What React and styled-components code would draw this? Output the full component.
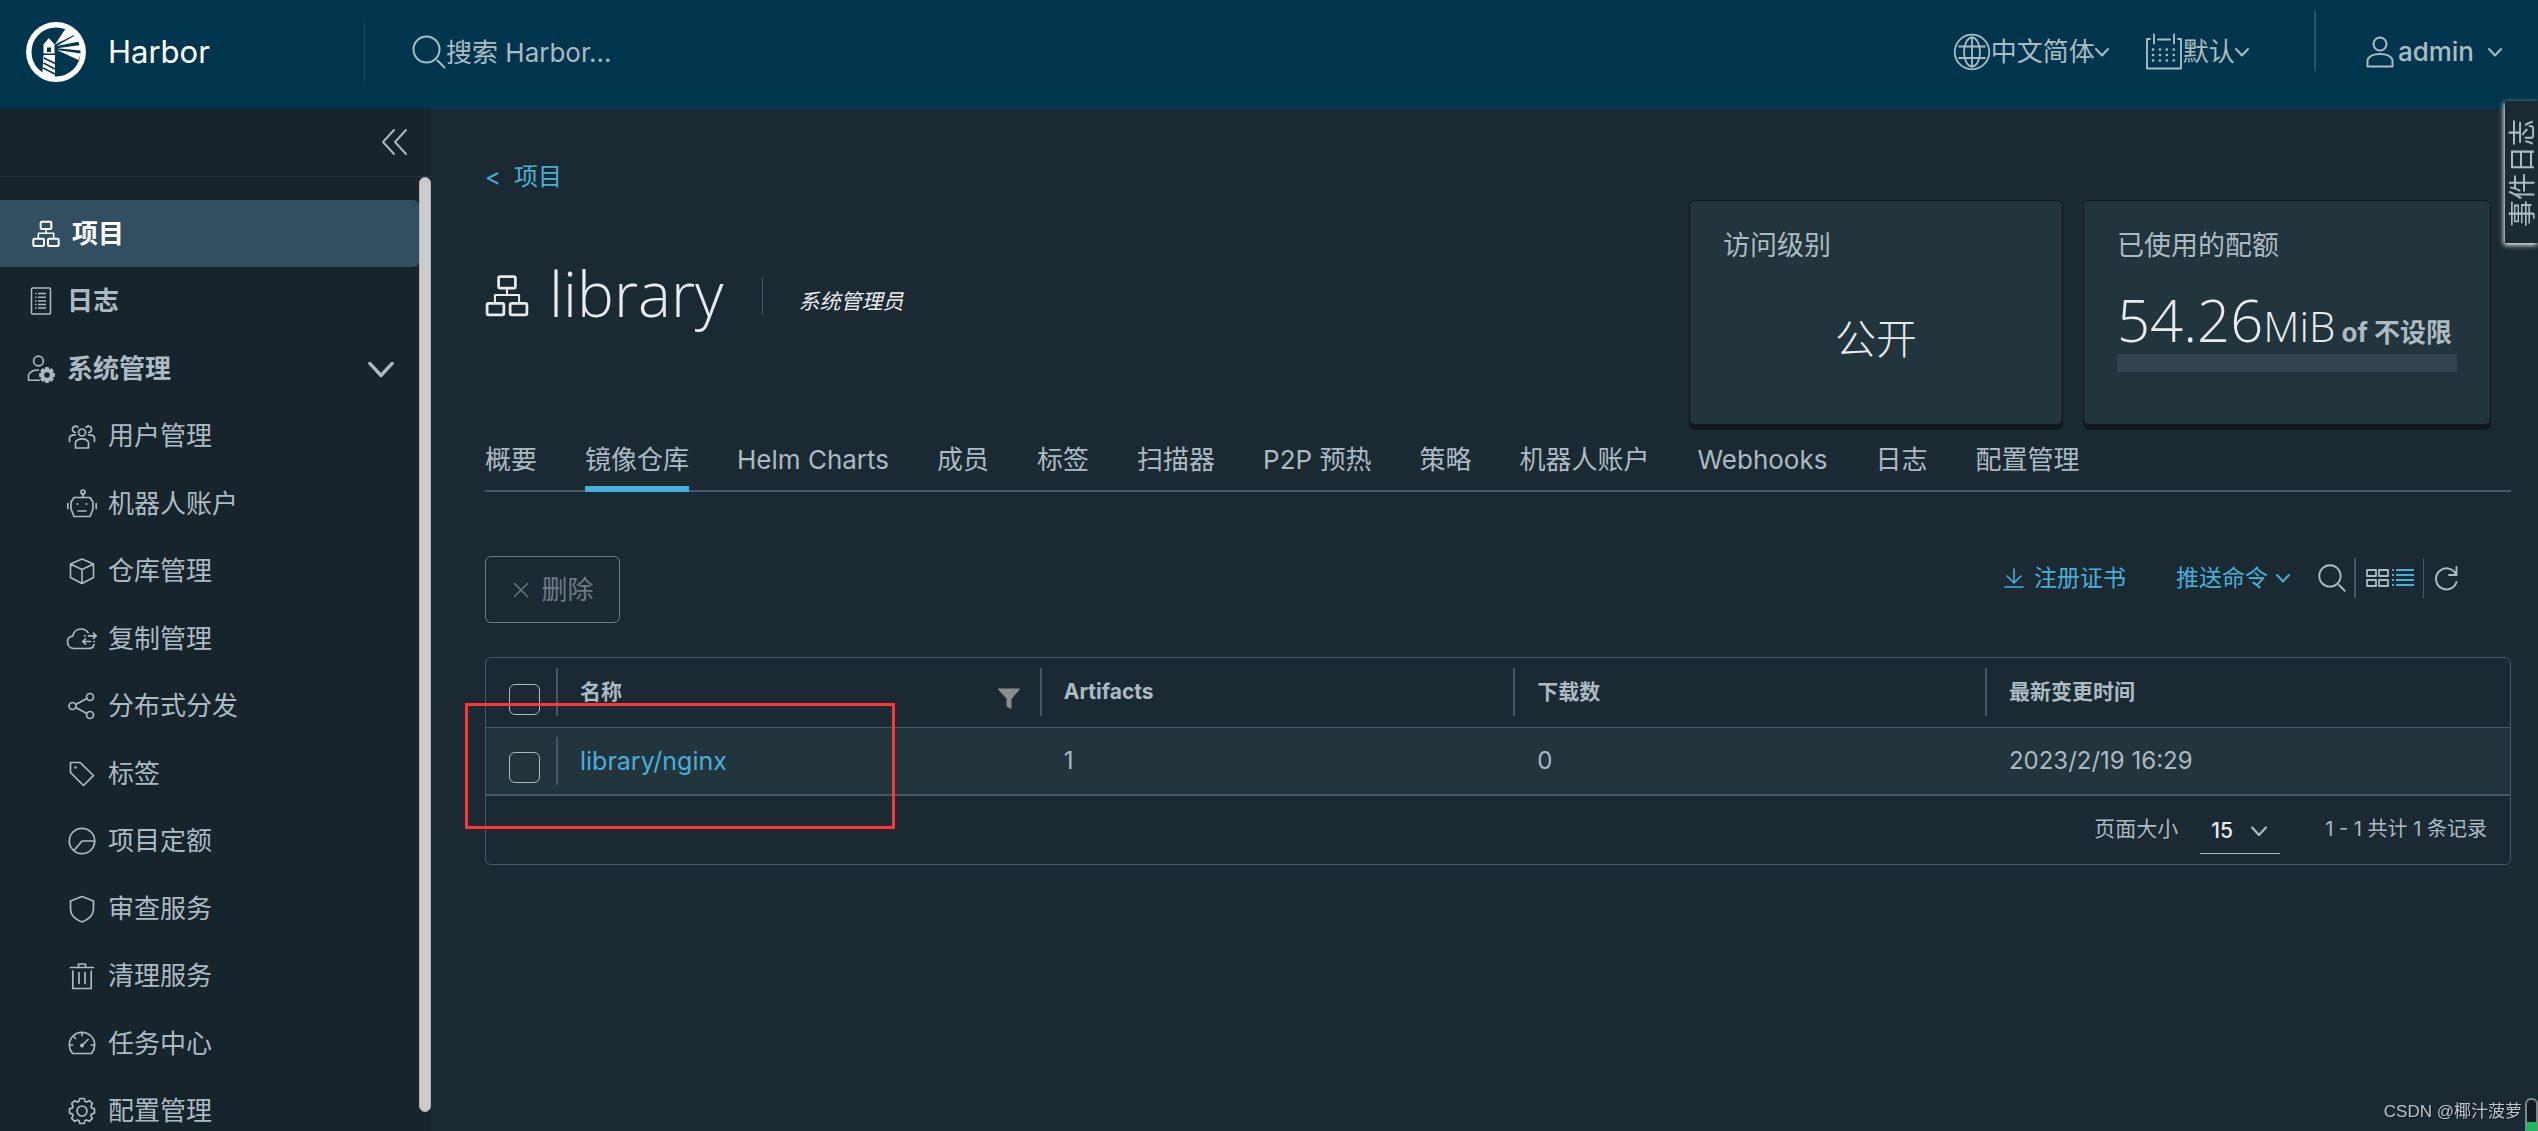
import React from "react";
import styled, { createGlobalStyle, css } from "styled-components";

const c = {
  header: "#00364d",
  side: "#17242b",
  page: "#1b2a32",
  card: "#22343c",
  line: "#495865",
  text: "#acbac3",
  bright: "#e9ecef",
  link: "#49afd9",
};
const cjk = `"Noto Sans CJK SC", sans-serif`;
const body = `Inter, ${cjk}`;
const light = `"Open Sans", ${cjk}`;

const Global = createGlobalStyle`
  *, *::before, *::after { box-sizing: border-box; }
  body { margin: 0; background: ${c.page}; color: ${c.text}; font-family: ${body}; font-size: 26px; line-height: 36px; }
  button, input, select { font: inherit; color: inherit; margin: 0; }
  a { text-decoration: none; color: inherit; }
`;

/* ---------- icons ---------- */
const Svg = styled.svg`
  display: block;
  flex: none;
  fill: none;
  stroke: currentColor;
  stroke-linejoin: round;
  stroke-linecap: round;
`;
const Icon = ({ size = 32, w = 2, box = "0 0 36 36", height, children }) => (
  <Svg width={size} height={height || size} viewBox={box} strokeWidth={w} aria-hidden="true">
    {children}
  </Svg>
);
const OrgIcon = ({ size = 28, w = 3 }) => (
  <Icon size={size} w={w} box="-1 -1 42 42">
    <rect x="12" y="1.5" width="16" height="11" rx="1.5" />
    <rect x="1" y="27" width="16" height="11" rx="1.5" />
    <rect x="23" y="27" width="16" height="11" rx="1.5" />
    <path d="M20 12.500V19M8.500 26.500V19H31.500V26.500" strokeWidth={w * 0.75} />
  </Icon>
);
const LogIcon = () => (
  <Icon size={28} w={1.5} box="0 0 28 28">
    <rect x="4.500" y="1" width="19" height="26" rx="1" />
    <path d="M8 6.500h1.500M8 10.200h1.500M8 13.900h1.500M8 17.600h1.500M8 21h1.500M11 6.500h8M11 10.200h8M11 13.900h8M11 17.600h8M11 21h8" strokeLinecap="butt" />
  </Icon>
);
const gearTeeth = (cx, cy, r, R, n) => {
  const pts = [];
  for (let i = 0; i < n; i++) {
    const a = (i * 2 * Math.PI) / n;
    const d = Math.PI / n;
    [[-0.95, r], [-0.5, R], [0.5, R], [0.95, r]].forEach(([k, q]) => {
      const t = a + k * d * 0.85;
      pts.push(`${(cx + q * Math.sin(t)).toFixed(2)},${(cy - q * Math.cos(t)).toFixed(2)}`);
    });
  }
  return pts.join(" ");
};
const AdminIcon = () => (
  <Icon size={28} w={1.6} box="0 0 28 28">
    <circle cx="11.500" cy="6" r="4.900" />
    <path d="M12.500 25.200H1.500V20c1.500-3.500 5.500-5 10-5" />
    <polygon points={gearTeeth(20, 20, 5.2, 7.2, 8)} fill="currentColor" />
    <circle cx="20" cy="20" r="2.800" fill={c.side} stroke="none" />
  </Icon>
);
const UsersIcon = () => (
  <Icon size={32} w={1.7} box="0 0 32 32">
    <circle cx="16" cy="12.500" r="3.500" />
    <path d="M9.500 28v-5.500c0-2 3-3.700 6.500-3.700s6.500 1.700 6.500 3.700V28z" />
    <path d="M9.300 12.500a3.200 3.200 0 1 1 2.700-5.300M22.700 12.500a3.200 3.200 0 1 0-2.700-5.300" />
    <path d="M3.500 21.500V17.500c.8-1.800 3-2.700 6-2.500M28.500 21.500V17.500c-.8-1.800-3-2.700-6-2.500" />
  </Icon>
);
const RobotIcon = () => (
  <Icon size={32} w={1.7} box="0 0 32 32">
    <path d="M8 9.500H24L27 14V21L24 28.500H8L5 21V14z" />
    <circle cx="17" cy="4" r="2" />
    <path d="M17 6v3.500M12 23h8M1.800 15.500v5M30.200 15.500v5" />
    <circle cx="11.500" cy="16" r="1" fill="currentColor" stroke="none" />
    <circle cx="20.500" cy="16" r="1" fill="currentColor" stroke="none" />
  </Icon>
);
const BoxIcon = () => (
  <Icon size={32} w={1.6} box="0 0 32 32">
    <path d="M16 4 27.500 9V22.500L16 28.500 4.500 22.500V9zM4.500 9 16 14.500 27.500 9M16 14.500v14" />
  </Icon>
);
const CloudIcon = () => (
  <Icon size={32} w={1.7} box="0 0 32 32">
    <path d="M22 9.500C20.500 7.300 18 6 15 6c-4.300 0-7.500 2.800-8 7-3.500.5-5.500 3-5.500 5.800C1.500 22.500 4 25.500 8 25.500h14.500c3 0 5-1.500 5.500-4" />
    <path d="M22.500 12.800h7.500M27.500 10.200l2.700 2.600-2.700 2.600M24.500 18.500H17M19.500 15.900l-2.700 2.600 2.700 2.600" />
    <path d="M18.500 12.800h.5M28 18.500h.5" />
  </Icon>
);
const ShareIcon = () => (
  <Icon size={32} w={1.7} box="0 0 32 32">
    <circle cx="24" cy="7" r="3.500" />
    <circle cx="6.500" cy="16" r="3.500" />
    <circle cx="24" cy="25" r="3.500" />
    <path d="M9.700 14.500 20.800 8.500M9.700 17.500l11.100 6" />
  </Icon>
);
const TagIcon = () => (
  <Icon size={32} w={1.7} box="0 0 32 32">
    <path d="M4.500 4.500H14L27.500 17.500 17.500 27.500 4.500 14.500z" />
    <circle cx="9.500" cy="9.500" r="1.200" fill="currentColor" stroke="none" />
  </Icon>
);
const QuotaIcon = () => (
  <Icon size={32} w={1.7} box="0 0 32 32">
    <circle cx="16" cy="16" r="12.700" />
    <path d="M28.500 16H16L8 25.500" />
  </Icon>
);
const ShieldIcon = () => (
  <Icon size={32} w={1.7} box="0 0 32 32">
    <path d="M16 3.500 27.500 8v8c0 6-5 10.500-11.500 13C9.500 26.500 4.500 22 4.500 16V8z" />
  </Icon>
);
const TrashIcon = () => (
  <Icon size={32} w={1.7} box="0 0 32 32">
    <path d="M4.500 7.500h23M6.800 11v17.500h18.400V11M12.500 7V4h7v3M13 12.500v11M19 12.500v11" />
  </Icon>
);
const GaugeIcon = () => (
  <Icon size={32} w={1.7} box="0 0 32 32">
    <path d="M6.500 25.500C4.500 23 3.300 20.300 3.300 17a12.700 12.700 0 0 1 25.400 0c0 3.300-1.200 6-3.200 8.500z" />
    <path d="M16 17.500 22 11.500M16 5v2.500M4 17h2.500M28 17h-2.500M8 9l1.500 1.500" />
    <circle cx="16" cy="17.500" r="2" fill="currentColor" stroke="none" />
  </Icon>
);
const GearIcon = () => (
  <Icon size={32} w={1.7} box="0 0 32 32">
    <polygon points={gearTeeth(16, 16, 10, 12.7, 8)} />
    <circle cx="16" cy="16" r="5" />
  </Icon>
);
const ChevronDown = ({ size = 14, w = 2 }) => (
  <Icon size={size} w={w} box="0 0 14 14"><path d="M1 4l6 6.500L13 4" /></Icon>
);
const SearchIcon = ({ size, w = 2 }) => (
  <Icon size={size} w={w} box="0 0 34 34">
    <circle cx="14.500" cy="14.500" r="13" /><path d="M25.500 25.500 32.500 32.500" />
  </Icon>
);
const GlobeIcon = () => (
  <Icon size={38} w={1.8} box="0 0 38 38">
    <circle cx="19" cy="19" r="17.300" />
    <ellipse cx="19" cy="19" rx="8" ry="14.500" />
    <path d="M19 4.500v29M6 13.500h26M6 25h26" />
  </Icon>
);
const CalendarIcon = () => (
  <Icon size={38} w={1.9} box="0 0 38 38">
    <path d="M5 6H2V35.500H36V6h-3M13 6.500h12M9 1.500v9M29 1.500v9" />
    <path d="M8 16.500h24M8 22h24M8 27.500h24" strokeDasharray="0.1 6.800" strokeWidth="2.600" />
  </Icon>
);
const UserIcon = () => (
  <Icon size={32} w={2} box="0 0 32 32">
    <circle cx="16" cy="8" r="6.500" />
    <path d="M3.500 30.500V24C5 20 10 18 16 18s11 2 12.500 6v6.500z" />
  </Icon>
);
const Lighthouse = () => (
  <svg width="60" height="60" viewBox="0 0 60 60" role="img" aria-label="Harbor logo">
    <circle cx="30" cy="30" r="27.200" fill="none" stroke="#fff" strokeWidth="5.400" />
    <path d="M29 22.500 40 6l9 6.500z M30.500 24 50 13l3.500 6.500z M31 26.300 55 23v5.500z M31 28 55 31.500l-2.500 6.500z" fill="#fff" />
    <path d="M17 23 22.800 16 29 23z M17.500 23H28.500V32H17.500z M17.500 33H29V57H16z" fill="#fff" />
    <path d="M21 25.500h4V30h-4z" fill={c.header} />
    <path d="M17 32.300H29M18 36l11 5.500M17.500 41l11.500 6M17 46l12 6" stroke={c.header} strokeWidth="1.500" />
  </svg>
);

/* ---------- shell ---------- */
const Page = styled.div`
  height: 100vh;
  overflow: hidden;
  display: flex;
  flex-direction: column;
`;
const Header = styled.header`
  flex: none;
  height: 109px;
  padding: 0 36px 6px 26px;
  background: ${c.header};
  display: flex;
  align-items: center;
`;
const Brand = styled.a`
  flex: none;
  width: 338px;
  display: flex;
  align-items: center;
  gap: 22px;
  color: #fff;
  font-size: 31px;
`;
const Divider = styled.span`
  flex: none;
  width: ${(p) => p.$w || 2}px;
  height: ${(p) => p.$h}px;
  background: ${(p) => p.$color || c.line};
`;
const Search = styled.label`
  flex: 1;
  display: flex;
  align-items: center;
  padding-left: 47px;
  input {
    flex: 1;
    border: 0;
    padding: 2px 0 0;
    background: none;
    outline: none;
    &::placeholder { color: ${c.text}; opacity: 1; }
  }
`;
const HeaderButton = styled.button`
  border: 0;
  background: none;
  padding: 0;
  display: flex;
  align-items: center;
  gap: ${(p) => p.$gap || 0}px;
  margin-right: ${(p) => p.$after || 0}px;
  font-weight: ${(p) => p.$weight || 400};
`;
const UserName = styled.span`
  margin-right: 12px;
`;
const HeaderRule = styled(Divider)`
  align-self: flex-start;
  margin: 11px 48px 0 0;
`;
const Body = styled.div`
  flex: 1;
  min-height: 0;
  display: flex;
`;
const Side = styled.nav`
  flex: none;
  width: 431px;
  background: ${c.side};
  display: flex;
  flex-direction: column;
`;
const Collapse = styled.button`
  flex: none;
  height: 68px;
  border: 0;
  border-bottom: 1px solid #22333b;
  background: none;
  padding: 0 22px 2px;
  display: flex;
  align-items: center;
  justify-content: flex-end;
`;
const SideScroll = styled.div`
  flex: 1;
  min-height: 0;
  display: flex;
`;
const SideList = styled.ul`
  flex: 1;
  list-style: none;
  margin: 0;
  padding: 23px 0 0;
  overflow: hidden;
`;
const SideItem = styled.li`
  height: 67px;
  &:nth-child(even) { height: 68px; }
`;
const SideLink = styled.a`
  height: 67px;
  display: flex;
  align-items: center;
  padding: 0 25px 0 ${(p) => (p.$nested ? 66 : p.$active ? 32 : 27)}px;
  gap: ${(p) => (p.$nested ? 10 : 12)}px;
  font-weight: ${(p) => (p.$nested ? 400 : 700)};
  ${(p) => p.$active && css`
    background: #324f62;
    color: #fff;
    border-radius: 0 6px 6px 0;
  `}
`;
const SideLabel = styled.span`
  flex: 1;
`;
const Thumb = styled.div`
  flex: none;
  width: 12px;
  margin-bottom: 19px;
  border-radius: 6px;
  background: #cbcbcb;
  border: 1px solid #b4b4b4;
`;

/* ---------- content ---------- */
const Main = styled.main`
  flex: 1;
  min-width: 0;
  padding: 0 27px 0 54px;
`;
const Summary = styled.section`
  display: flex;
  justify-content: space-between;
  height: 321px;
  padding-right: 20px;
`;
const Crumb = styled.a`
  display: inline-flex;
  gap: 13px;
  margin-top: 50px;
  font-size: 24px;
  color: ${c.link};
`;
const TitleRow = styled.div`
  display: flex;
  align-items: center;
  margin-top: 50px;
  color: ${c.bright};
  h1 {
    margin: 0 38px 6px 20px;
    font: 300 62px/96px ${light};
  }
  em { margin-left: 36px; padding-top: 12px; font-size: 21px; }
`;
const Cards = styled.div`
  display: flex;
  gap: 20px;
  margin-top: 91px;
`;
const Card = styled.article`
  width: ${(p) => p.$w}px;
  height: 225px;
  padding: 27px 33px;
  background: ${c.card};
  border: 1px solid #11181f;
  border-radius: 6px;
  box-shadow: 0 5px 0 #10171e;
  h2 { margin: 0; font-size: 27px; line-height: 36px; font-weight: 400; }
`;
const Level = styled.p`
  margin: 44px 0 0;
  text-align: center;
  color: ${c.bright};
  font: 300 41px/60px ${light};
`;
const Quota = styled.p`
  margin: 22px 0 0;
  white-space: nowrap;
  line-height: 30px;
  color: ${c.text};
  font-weight: 700;
  span { color: ${c.bright}; font-family: ${light}; font-weight: 300; }
`;
const Big = styled.span`
  font-size: 58px;
  line-height: 68px;
`;
const Unit = styled.span`
  font-size: 42px;
`;
const Meter = styled.div`
  height: 18px;
  background: #31444f;
`;
const Tabs = styled.div`
  display: flex;
  gap: 48px;
  border-bottom: 2px solid ${c.line};
`;
const Tab = styled.button`
  border: 0;
  background: none;
  padding: 12px 0;
  line-height: 36px;
  white-space: nowrap;
  box-shadow: ${(p) => (p.$active ? `0 2px 0 ${c.link}, inset 0 -4px 0 ${c.link}` : "none")};
`;
const Toolbar = styled.div`
  display: flex;
  justify-content: space-between;
  align-items: flex-start;
  margin-top: 64px;
`;
const DeleteButton = styled.button`
  height: 67px;
  width: 135px;
  display: flex;
  align-items: center;
  justify-content: center;
  gap: 12px;
  padding: 0 0 0 2px;
  border: 1px solid #6f7c85;
  border-radius: 6px;
  background: none;
  color: #6f7c85;
`;
const Actions = styled.div`
  display: flex;
  align-items: center;
  height: 44px;
  padding-right: 51px;
`;
const Action = styled.button`
  border: 0;
  background: none;
  padding: 0;
  display: flex;
  align-items: center;
  gap: ${(p) => p.$gap || 0}px;
  margin: 0 ${(p) => p.$after || 0}px 0 0;
  font-size: 23px;
  color: ${(p) => (p.$plain ? c.text : c.link)};
`;

const GridBox = styled.section`
  position: relative;
  margin-top: 34px;
  border: 1px solid ${c.line};
  border-radius: 6px;
`;
const Table = styled.table`
  width: 100%;
  table-layout: fixed;
  border-collapse: collapse;
  text-align: left;
`;
const Col = styled.col`width: ${(p) => p.$w};`;
const HeadRow = styled.tr`
  height: 69px;
  font-size: 21px;
  border-bottom: 1px solid ${c.line};
`;
const DataRow = styled.tr`
  height: 68px;
  font-size: 24px;
  background: ${c.card};
  border-bottom: 2px solid ${c.line};
`;
const Cell = styled.td`
  padding: 0;
  > div {
    display: flex;
    align-items: center;
    justify-content: space-between;
    height: 48px;
    padding: 0 20px 0 22px;
    border-left: ${(p) => (p.$rule ? `2px solid ${c.line}` : "2px solid transparent")};
  }
`;
const CheckCell = styled.td`
  padding: 14px 0 0 23px;
  vertical-align: middle;
  input {
    appearance: none;
    display: block;
    width: 31px;
    height: 31px;
    margin: 0;
    border: 1px solid ${c.text};
    border-radius: 6px;
  }
`;
const RepoLink = styled.a`
  color: ${c.link};
  font-size: 25px;
`;
const FilterButton = styled.button`
  border: 0;
  background: none;
  padding: 14px 0 0;
`;
const Footer = styled.footer`
  display: flex;
  justify-content: flex-end;
  align-items: center;
  height: 68px;
  padding: 0 23px 2px 0;
  font-size: 20px;
`;
const SizeLabel = styled.label`
  display: flex;
  align-items: center;
  gap: 22px;
  margin-right: 45px;
  font-size: 21px;
`;
const SelectBox = styled.span`
  display: flex;
  align-items: center;
  width: 80px;
  padding: 0 13px 0 0;
  border-bottom: 1px solid ${c.text};
  margin-top: 4px;
  select {
    appearance: none;
    flex: 1;
    min-width: 0;
    height: 44px;
    padding: 0 0 0 11px;
    border: 0;
    background: none;
    color: ${c.bright};
    font-weight: 500;
  }
`;
const Marker = styled.div`
  position: absolute;
  left: -21px;
  top: 45px;
  width: 430px;
  height: 126px;
  border: 3px solid #ff3636;
  pointer-events: none;
`;
const EventTab = styled.button`
  position: fixed;
  right: 0;
  top: 101px;
  width: 33px;
  height: 142px;
  padding: 2px 0 0;
  border: 0;
  background: ${c.page};
  box-shadow: -1px 2px 5px #fff;
  display: flex;
  align-items: center;
  justify-content: flex-end;
  span {
    writing-mode: vertical-rl;
    text-orientation: sideways;
    transform: rotate(180deg);
    font-size: 27px;
    line-height: 30px;
  }
`;
const Watermark = styled.span`
  position: fixed;
  right: 16px;
  bottom: 5px;
  font: 17px/28px "Liberation Sans", ${cjk};
  color: #c0c4c7;
  text-shadow: 1px 1px 1px #10171e;
`;
const Gauge = styled.span`
  position: fixed;
  right: 0;
  bottom: -6px;
  width: 13px;
  height: 39px;
  border: 2px solid #7d858b;
  border-radius: 6px;
  background: linear-gradient(#131c22 64%, #12c05a 64%);
`;

const menu = [
  { label: "项目", icon: <OrgIcon />, active: true },
  { label: "日志", icon: <LogIcon /> },
  { label: "系统管理", icon: <AdminIcon />, open: true },
  { label: "用户管理", icon: <UsersIcon />, nested: true },
  { label: "机器人账户", icon: <RobotIcon />, nested: true },
  { label: "仓库管理", icon: <BoxIcon />, nested: true },
  { label: "复制管理", icon: <CloudIcon />, nested: true },
  { label: "分布式分发", icon: <ShareIcon />, nested: true },
  { label: "标签", icon: <TagIcon />, nested: true },
  { label: "项目定额", icon: <QuotaIcon />, nested: true },
  { label: "审查服务", icon: <ShieldIcon />, nested: true },
  { label: "清理服务", icon: <TrashIcon />, nested: true },
  { label: "任务中心", icon: <GaugeIcon />, nested: true },
  { label: "配置管理", icon: <GearIcon />, nested: true },
];
const tabs = ["概要", "镜像仓库", "Helm Charts", "成员", "标签", "扫描器", "P2P 预热", "策略", "机器人账户", "Webhooks", "日志", "配置管理"];

export default function App() {
  return (
    <Page>
      <Global />
      <Header>
        <Brand href="#"><Lighthouse />Harbor</Brand>
        <Divider $w={1} $h={60} $color="#1d4c60" />
        <Search>
          <SearchIcon size={34} />
          <input type="text" placeholder="搜索 Harbor..." aria-label="搜索 Harbor" />
        </Search>
        <HeaderButton $after={36}><GlobeIcon />中文简体<ChevronDown /></HeaderButton>
        <HeaderButton $after={65}><CalendarIcon />默认<ChevronDown /></HeaderButton>
        <HeaderRule $h={60} $color="#2b5468" />
        <HeaderButton $weight={500} $gap={2}>
          <UserIcon /><UserName>admin</UserName><ChevronDown />
        </HeaderButton>
      </Header>
      <Body>
        <Side aria-label="主导航">
          <Collapse aria-label="收起">
            <Icon size={28} w={1.9} box="0 0 28 28"><path d="M13 2 2 14l11 12M25 2 14 14l11 12" /></Icon>
          </Collapse>
          <SideScroll>
            <SideList>
              {menu.map((m) => (
                <SideItem key={m.label}>
                  <SideLink href="#" $nested={m.nested} $active={m.active}>
                    {m.icon}
                    <SideLabel>{m.label}</SideLabel>
                    {m.open && <ChevronDown size={26} w={1.8} />}
                  </SideLink>
                </SideItem>
              ))}
            </SideList>
            <Thumb />
          </SideScroll>
        </Side>
        <Main>
          <Summary>
            <div>
              <Crumb href="#"><span>&lt;</span><span>项目</span></Crumb>
              <TitleRow>
                <OrgIcon size={44} w={2.6} />
                <h1>library</h1>
                <Divider $w={1} $h={36} />
                <em>系统管理员</em>
              </TitleRow>
            </div>
            <Cards>
              <Card $w={374}>
                <h2>访问级别</h2>
                <Level>公开</Level>
              </Card>
              <Card $w={408}>
                <h2>已使用的配额</h2>
                <Quota><Big>54.26</Big><Unit>MiB</Unit> of 不设限</Quota>
                <Meter />
              </Card>
            </Cards>
          </Summary>
          <Tabs role="tablist">
            {tabs.map((t, i) => (
              <Tab key={t} role="tab" aria-selected={i === 1} $active={i === 1}>{t}</Tab>
            ))}
          </Tabs>
          <Toolbar>
            <DeleteButton disabled>
              <Icon size={16} w={1.4} box="0 0 16 16"><path d="M1.500 1.500l13 13M14.500 1.500l-13 13" /></Icon>
              删除
            </DeleteButton>
            <Actions>
              <Action $gap={10} $after={50}>
                <Icon size={20} w={1.6} box="0 0 20 20"><path d="M10 1v13M3 8l7 7 7-7M1 19h18" /></Icon>
                注册证书
              </Action>
              <Action $gap={8} $after={28}>推送命令<ChevronDown /></Action>
              <Action $plain $after={8} aria-label="搜索"><SearchIcon size={28} w={2.2} /></Action>
              <Divider $h={40} />
              <Action $plain aria-label="卡片视图">
                <Icon size={36} height={24} w={1.8} box="-10 0 36 24">
                  <path d="M1 4h9v6H1zM13 4h9v6h-9zM1 14h9v6H1zM13 14h9v6h-9z" />
                </Icon>
              </Action>
              <Action $after={9} aria-label="列表视图">
                <Icon size={22} height={24} w={2} box="0 0 22 24">
                  <path d="M0 4h2M4 4h18M0 9h2M4 9h18M0 14h2M4 14h18M0 19h2M4 19h18" strokeLinecap="butt" />
                </Icon>
              </Action>
              <Divider $w={1} $h={40} />
              <Action $plain aria-label="刷新">
                <Icon size={36} height={26} w={2} box="-10 0 36 26">
                  <path d="M22 9.500A10.500 10.500 0 1 0 22.500 17M22.500 2v8H15" />
                </Icon>
              </Action>
            </Actions>
          </Toolbar>
          <GridBox>
            <Table>
              <colgroup>
                <Col $w="70px" /><Col $w="23.9%" /><Col $w="23.4%" /><Col $w="23.3%" /><Col $w="auto" />
              </colgroup>
              <thead>
                <HeadRow>
                  <CheckCell as="th"><input type="checkbox" aria-label="全选" /></CheckCell>
                  <Cell as="th" $rule>
                    <div>
                      名称
                      <FilterButton aria-label="筛选">
                        <Icon size={22} box="0 0 22 22" w={1}>
                          <path d="M.5 1h21L13 11v9.500l-4-2V11z" fill="#8c8c8c" stroke="#8c8c8c" />
                        </Icon>
                      </FilterButton>
                    </div>
                  </Cell>
                  <Cell as="th" $rule><div>Artifacts</div></Cell>
                  <Cell as="th" $rule><div>下载数</div></Cell>
                  <Cell as="th" $rule><div>最新变更时间</div></Cell>
                </HeadRow>
              </thead>
              <tbody>
                <DataRow>
                  <CheckCell><input type="checkbox" aria-label="选择 library/nginx" /></CheckCell>
                  <Cell $rule><div><RepoLink href="#">library/nginx</RepoLink></div></Cell>
                  <Cell><div>1</div></Cell>
                  <Cell><div>0</div></Cell>
                  <Cell><div>2023/2/19 16:29</div></Cell>
                </DataRow>
              </tbody>
            </Table>
            <Footer>
              <SizeLabel>
                页面大小
                <SelectBox>
                  <select defaultValue="15"><option>15</option><option>25</option><option>50</option></select>
                  <ChevronDown size={16} />
                </SelectBox>
              </SizeLabel>
              <span>1 - 1 共计 1 条记录</span>
            </Footer>
            <Marker />
          </GridBox>
        </Main>
      </Body>
      <EventTab><span>事件日志</span></EventTab>
      <Watermark>CSDN @椰汁菠萝</Watermark>
      <Gauge />
    </Page>
  );
}
